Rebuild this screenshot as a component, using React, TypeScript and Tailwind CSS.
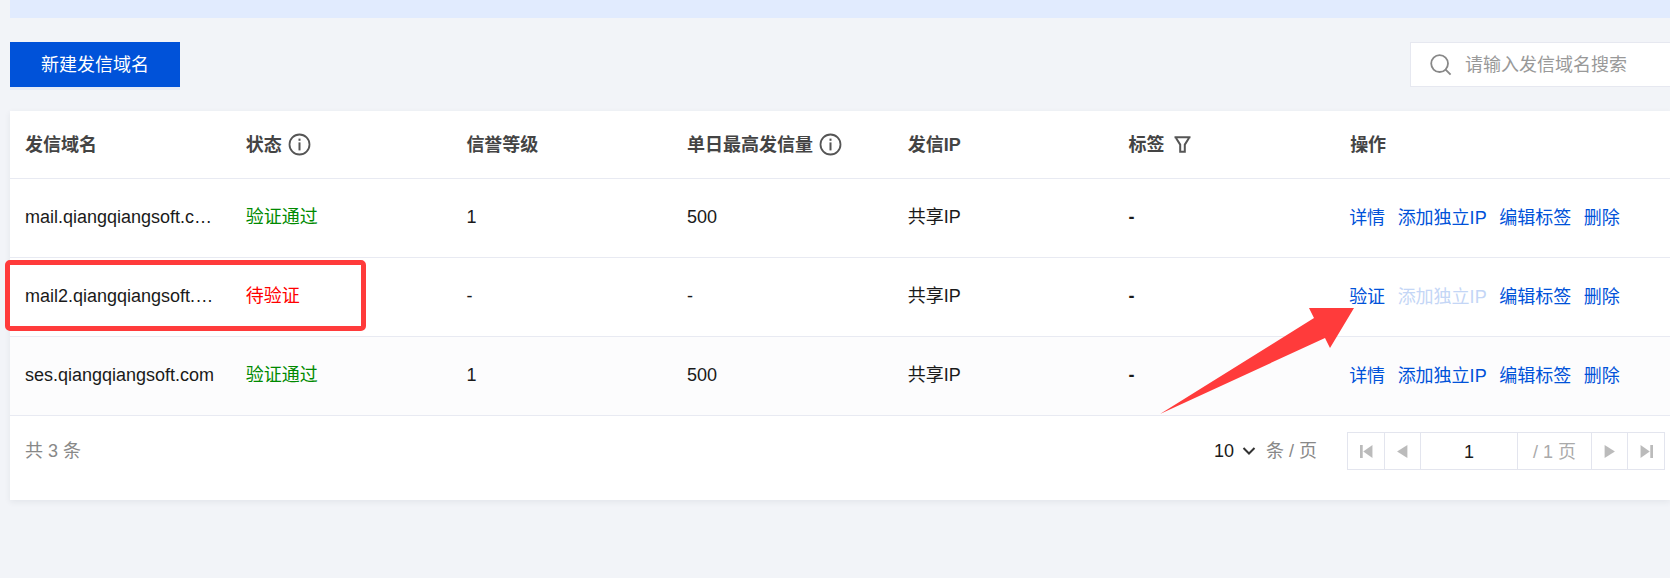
import React from "react";

const FONT = "[font-family:'Liberation_Sans','Noto_Sans_CJK_SC',sans-serif]";
const GRID = "grid grid-cols-[220.7px_220.7px_220.7px_220.7px_220.7px_220.7px_1fr] items-center";

function InfoIcon() {
  return (
    <svg width="23" height="23" viewBox="0 0 23 23" fill="none" className="ml-[6px] shrink-0 text-[#555]">
      <circle cx="11.5" cy="11.5" r="10" stroke="currentColor" strokeWidth="1.8" />
      <rect x="10.5" y="5.6" width="2" height="2.2" fill="currentColor" />
      <rect x="10.5" y="9.4" width="2" height="8" fill="currentColor" />
    </svg>
  );
}

function FilterIcon() {
  return (
    <svg width="19" height="19" viewBox="0 0 19 19" fill="none" className="ml-[9px] shrink-0 text-[#555]">
      <path d="M1.5 2.2h16M3 3 7.2 9.6v7.2h4.6V9.6L16 3" stroke="currentColor" strokeWidth="2" />
    </svg>
  );
}

function Head({ children, icon, cls = "pl-[15px]" }: { children: React.ReactNode; icon?: React.ReactNode; cls?: string }) {
  return (
    <div className={`flex items-center font-bold text-[#444] ${cls}`}>
      <span>{children}</span>
      {icon}
    </div>
  );
}

function Cell({ children, cls = "text-[#1a1a1a]" }: { children: React.ReactNode; cls?: string }) {
  return <div className={`pl-[15px] pr-[15px] truncate ${cls}`}>{children}</div>;
}

function Row({
  domain,
  status,
  statusCls,
  level,
  quota,
  first,
  disabled,
  bg,
}: {
  domain: string;
  status: string;
  statusCls: string;
  level: string;
  quota: string;
  first: string;
  disabled?: boolean;
  bg?: string;
}) {
  return (
    <div className={`${GRID} h-[79px] border-b border-[#e8eaf2] ${bg ?? "bg-white"}`}>
      <Cell cls="text-[#1a1a1a] pb-[2px]">{domain}</Cell>
      <Cell cls={`${statusCls} pb-[2px]`}>{status}</Cell>
      <Cell cls="text-[#1a1a1a] pb-[2px]">{level}</Cell>
      <Cell cls="text-[#1a1a1a] pb-[2px]">{quota}</Cell>
      <Cell cls="text-[#1a1a1a] pb-[2px]">共享IP</Cell>
      <Cell cls="text-[#1a1a1a] pb-[2px] font-bold">-</Cell>
      <div className="flex gap-[12.5px] pl-[15px] text-[#0052d9] whitespace-nowrap">
        <span>{first}</span>
        <span className={disabled ? "text-[#c4d6f6]" : ""}>添加独立IP</span>
        <span>编辑标签</span>
        <span>删除</span>
      </div>
    </div>
  );
}

function PageBtn({ w, children, border = true }: { w: string; children: React.ReactNode; border?: boolean }) {
  return (
    <div className={`${w} h-[37px] flex items-center justify-center ${border ? "border-r border-[#e3e5ee]" : ""}`}>
      {children}
    </div>
  );
}

export default function App() {
  return (
    <div className={`relative h-[578px] overflow-hidden bg-[#f2f4f8] pl-[10px] text-[18px] leading-[26px] ${FONT}`}>
      <div className="h-[18px] bg-[#e1ebfe]" />

      <div className="mt-[24px] flex items-start justify-between">
        <div className="h-[45px] w-[170px] bg-[#0052d9] text-white flex items-center justify-center shadow-[0_3px_0_#e6ebf7]">
          新建发信域名
        </div>
        <div className="h-[45px] w-[260px] border-y border-l border-[#e6e8f0] bg-white flex items-center pl-[19px]">
          <svg width="22" height="22" viewBox="0 0 22 22" fill="none" className="shrink-0 text-[#888]">
            <circle cx="9.6" cy="9.6" r="8.4" stroke="currentColor" strokeWidth="1.8" />
            <path d="M15.6 15.6 20.6 20.6" stroke="currentColor" strokeWidth="1.8" />
          </svg>
          <span className="ml-[13px] text-[#999] whitespace-nowrap">请输入发信域名搜索</span>
        </div>
      </div>

      <div className="mt-[24px] bg-white shadow-[0_2px_6px_rgba(54,58,80,0.08)]">
        <div className={`${GRID} h-[68px] border-b border-[#e8eaf2]`}>
          <Head>发信域名</Head>
          <Head icon={<InfoIcon />}>状态</Head>
          <Head>信誉等级</Head>
          <Head icon={<InfoIcon />}>单日最高发信量</Head>
          <Head>发信IP</Head>
          <Head icon={<FilterIcon />}>标签</Head>
          <Head cls="pl-[16px]">操作</Head>
        </div>

        <Row domain="mail.qiangqiangsoft.com" status="验证通过" statusCls="text-[#008a00]" level="1" quota="500" first="详情" />
        <Row domain="mail2.qiangqiangsoft.com" status="待验证" statusCls="text-[#ff0000]" level="-" quota="-" first="验证" disabled />
        <Row domain="ses.qiangqiangsoft.com" status="验证通过" statusCls="text-[#008a00]" level="1" quota="500" first="详情" bg="bg-[#fcfcfd]" />

        <div className="h-[84px] flex items-start justify-between pl-[15px] pr-[5px] pt-[16px]">
          <span className="mt-[6px] text-[#888]">共 3 条</span>
          <div className="flex items-center">
            <span className="text-[#1a1a1a]">10</span>
            <svg width="14" height="10" viewBox="0 0 14 10" fill="none" className="ml-[8px] text-[#333]">
              <path d="M1.5 2 7 7.5 12.5 2" stroke="currentColor" strokeWidth="2" />
            </svg>
            <span className="ml-[10px] text-[#888] whitespace-nowrap">条 / 页</span>
            <div className="ml-[30px] flex border border-[#e3e5ee] h-[38px] w-[318px]">
              <PageBtn w="w-[37px]">
                <svg width="13" height="13" viewBox="0 0 12 12" fill="#bbb"><rect x="0" y="0" width="2.5" height="12" /><path d="M11.5 0v12L3 6z" /></svg>
              </PageBtn>
              <PageBtn w="w-[36px]">
                <svg width="11" height="13" viewBox="0 0 10 12" fill="#bbb"><path d="M9.5 0v12L0 6z" /></svg>
              </PageBtn>
              <PageBtn w="w-[97px]"><span className="text-[#1a1a1a]">1</span></PageBtn>
              <PageBtn w="w-[74px]"><span className="text-[#aaa] whitespace-nowrap">/ 1 页</span></PageBtn>
              <PageBtn w="w-[36px]">
                <svg width="11" height="13" viewBox="0 0 10 12" fill="#bbb"><path d="M0.5 0v12L10 6z" /></svg>
              </PageBtn>
              <PageBtn w="w-[36px]" border={false}>
                <svg width="13" height="13" viewBox="0 0 12 12" fill="#bbb"><path d="M0.5 0v12L9 6z" /><rect x="9.5" y="0" width="2.5" height="12" /></svg>
              </PageBtn>
            </div>
          </div>
        </div>
      </div>

      {/* screenshot annotations */}
      <div className="absolute left-[5px] top-[260px] h-[71px] w-[361px] rounded-[5px] border-[5px] border-[#ff3b3b]" />
      <svg className="absolute left-[1150px] top-[300px]" width="220" height="125" viewBox="0 0 220 125">
        <polygon points="204,8 159,8 164,18 10,114 175,38 180,48" fill="#ff3b3b" />
      </svg>
    </div>
  );
}
